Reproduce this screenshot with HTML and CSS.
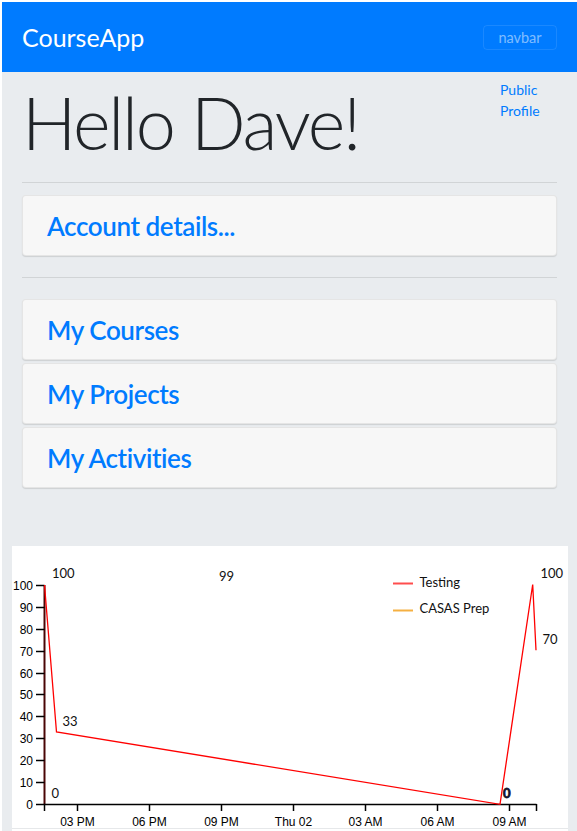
FILE: index.html
```html
<!DOCTYPE html>
<html lang="en">
<head>
<meta charset="utf-8">
<title>CourseApp</title>
<link rel="stylesheet" href="styles.css">
</head>
<body>
<nav class="navbar">
  <a class="brand" href="#">CourseApp</a>
  <button class="toggler" type="button">navbar</button>
</nav>
<main class="content">
  <div class="intro">
    <h1 class="hello">Hello Dave!</h1>
    <a class="profile" href="#">Public Profile</a>
  </div>
  <hr class="rule">
  <div class="card"><h3 class="card-title"><a href="#">Account details...</a></h3></div>
  <hr class="rule">
  <div class="card-list">
    <div class="card"><h3 class="card-title"><a href="#">My Courses</a></h3></div>
    <div class="card"><h3 class="card-title"><a href="#">My Projects</a></h3></div>
    <div class="card"><h3 class="card-title"><a href="#">My Activities</a></h3></div>
  </div>
</main>
<section class="chart">
  <svg class="chart-svg" width="556" height="282" viewBox="12 545 556 282" xmlns="http://www.w3.org/2000/svg">
    <!-- y axis -->
    <g class="axis">
      <line x1="44.5" y1="584" x2="44.5" y2="804" class="y-domain"/>
      <line x1="36" y1="584.5" x2="44.5" y2="584.5"/>
      <line x1="36" y1="606.5" x2="44.5" y2="606.5"/>
      <line x1="36" y1="628.5" x2="44.5" y2="628.5"/>
      <line x1="36" y1="650.5" x2="44.5" y2="650.5"/>
      <line x1="36" y1="672.5" x2="44.5" y2="672.5"/>
      <line x1="36" y1="693.5" x2="44.5" y2="693.5"/>
      <line x1="36" y1="715.5" x2="44.5" y2="715.5"/>
      <line x1="36" y1="737.5" x2="44.5" y2="737.5"/>
      <line x1="36" y1="759.5" x2="44.5" y2="759.5"/>
      <line x1="36" y1="781.5" x2="44.5" y2="781.5"/>
      <line x1="36" y1="803.5" x2="44.5" y2="803.5"/>
    </g>
    <g class="tick-label y-labels">
      <text x="33" y="588.5">100</text>
      <text x="33" y="610.5">90</text>
      <text x="33" y="632.5">80</text>
      <text x="33" y="654.5">70</text>
      <text x="33" y="676.5">60</text>
      <text x="33" y="697.5">50</text>
      <text x="33" y="719.5">40</text>
      <text x="33" y="741.5">30</text>
      <text x="33" y="763.5">20</text>
      <text x="33" y="785.5">10</text>
      <text x="33" y="807.5">0</text>
    </g>
    <!-- x axis -->
    <g class="axis">
      <line x1="44" y1="803.5" x2="536.5" y2="803.5"/>
      <line x1="44.5" y1="803" x2="44.5" y2="810"/>
      <line x1="77.5" y1="803" x2="77.5" y2="810"/>
      <line x1="149.5" y1="803" x2="149.5" y2="810"/>
      <line x1="221.5" y1="803" x2="221.5" y2="810"/>
      <line x1="293.5" y1="803" x2="293.5" y2="810"/>
      <line x1="365.5" y1="803" x2="365.5" y2="810"/>
      <line x1="437.5" y1="803" x2="437.5" y2="810"/>
      <line x1="509.5" y1="803" x2="509.5" y2="810"/>
      <line x1="536.5" y1="803" x2="536.5" y2="810"/>
    </g>
    <g class="tick-label x-labels">
      <text x="77.5" y="825">03 PM</text>
      <text x="149.5" y="825">06 PM</text>
      <text x="221.5" y="825">09 PM</text>
      <text x="293.5" y="825">Thu 02</text>
      <text x="365.5" y="825">03 AM</text>
      <text x="437.5" y="825">06 AM</text>
      <text x="509.5" y="825">09 AM</text>
    </g>
    <!-- data -->
    <polyline class="series-testing" points="44.5,584 56.5,731 500,803.3 532.7,583.5 536,649.3"/>
    <g class="data-label">
      <text x="52" y="577">100</text>
      <text x="219" y="579.5">99</text>
      <text x="62.5" y="724.5">33</text>
      <text x="51.5" y="796.5">0</text>
      <text x="540.5" y="576.5">100</text>
      <text x="542.5" y="643">70</text>
      <text class="data-label-stack" x="503" y="796.5">0</text>
    </g>
    <!-- legend -->
    <line class="legend-testing" x1="393" y1="582.5" x2="413" y2="582.5"/>
    <text class="legend-text" x="419.5" y="586">Testing</text>
    <line class="legend-casas" x1="393" y1="609.5" x2="413" y2="609.5"/>
    <text class="legend-text" x="419.5" y="612">CASAS Prep</text>
  </svg>
  <div class="chart-foot"></div>
</section>
</body>
</html>
```
FILE: styles.css
```css
html {
  background: #ffffff;
}

body {
  margin: 2px 0 0 2px;
  min-height: 829px;
  background: #e9ecef;
  font-family: Lato, "Open Sans", "Liberation Sans", sans-serif;
  color: #212529;
}

.navbar {
  height: 70px;
  background: #007bff;
  display: flex;
  align-items: center;
  justify-content: space-between;
  padding: 0 20px;
  box-sizing: border-box;
}

.brand {
  color: #ffffff;
  font-size: 25px;
  text-decoration: none;
  line-height: 30px;
}

.toggler {
  width: 74px;
  height: 25px;
  padding: 0;
  background: transparent;
  border: 1px solid rgba(255, 255, 255, 0.1);
  border-radius: 4px;
  color: rgba(255, 255, 255, 0.5);
  font-family: Lato, "Open Sans", sans-serif;
  font-size: 14.5px;
  line-height: 23px;
}

.content {
  padding: 0 20px;
}

.intro {
  display: flex;
  justify-content: space-between;
  align-items: flex-start;
  padding-top: 7px;
}

.hello {
  margin: 0;
  font-size: 72px;
  font-weight: 300;
  line-height: 86px;
  letter-spacing: -2.2px;
  color: #212529;
}

.profile {
  width: 57px;
  font-size: 14px;
  line-height: 21px;
  color: #007bff;
  text-decoration: none;
}

.rule {
  border: 0;
  border-top: 1px solid rgba(0, 0, 0, 0.1);
  margin: 17px 0 12px;
  height: 0;
}

.rule + .card-list {
  margin-top: 21px;
}

.card + .rule {
  margin-top: 21px;
}

.card {
  height: 61px;
  box-sizing: border-box;
  background: #f7f7f7;
  border: 1px solid rgba(0, 0, 0, 0.07);
  border-radius: 4px;
  box-shadow: 0 1px 1px rgba(0, 0, 0, 0.12);
  display: flex;
  align-items: center;
  padding: 0 24px;
}

.card-list {
  display: flex;
  flex-direction: column;
  gap: 3px;
}

.card-title {
  margin: 0;
  font-size: 26px;
  font-weight: 600;
  line-height: 32px;
  letter-spacing: -0.4px;
}

.card-title a {
  color: #007bff;
  text-decoration: none;
}

.chart {
  margin: 58px 9px 0 10px;
  background: #ffffff;
}

.chart-svg {
  display: block;
}

.chart-foot {
  height: 6px;
  border-top: 1px solid #e6e8ea;
}

.axis line {
  stroke: #000000;
  stroke-width: 1.5;
}

.axis .y-domain {
  stroke: #4a0606;
  stroke-width: 2;
}

.tick-label {
  font-family: "Liberation Sans", Arial, sans-serif;
  font-size: 12px;
  fill: #000000;
}

.y-labels {
  text-anchor: end;
}

.x-labels {
  text-anchor: middle;
}

.series-testing {
  fill: none;
  stroke: #ff0000;
  stroke-width: 1.3;
}

.data-label {
  font-family: Lato, "Open Sans", sans-serif;
  font-size: 13px;
  fill: #111111;
}

.data-label-stack {
  font-weight: 700;
  stroke: #1a1a3a;
  stroke-width: 0.8;
  letter-spacing: 0;
}

.legend-testing {
  stroke: #ff4d4d;
  stroke-width: 2;
}

.legend-casas {
  stroke: #f5b042;
  stroke-width: 2;
}

.legend-text {
  font-family: Lato, "Open Sans", sans-serif;
  font-size: 13px;
  fill: #111111;
}
```
